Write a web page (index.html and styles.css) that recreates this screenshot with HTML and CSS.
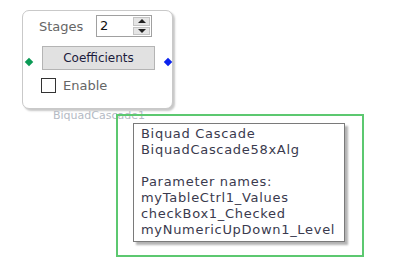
FILE: index.html
```html
<!DOCTYPE html>
<html>
  <head>
    <title>Biquad Cascade</title>
    <link rel="stylesheet" href="styles.css">
  </head>
  <body>
    <div class="canvas">
      <div class="node">
        <div class="row">
          <span class="label">Stages</span>
          <div class="numeric">
            <span class="value">2</span>
            <div class="spin">
              <div class="spin-btn"><span class="arrow up"></span></div>
              <div class="spin-btn"><span class="arrow down"></span></div>
            </div>
          </div>
        </div>
        <div class="button">Coefficients</div>
        <div class="check-row">
          <span class="checkbox"></span>
          <span class="label">Enable</span>
        </div>
        <span class="port port-in"></span>
        <span class="port port-out"></span>
      </div>
      <div class="node-name">BiquadCascade1</div>
      <div class="selection"></div>
      <div class="tooltip">
        <div>Biquad Cascade</div>
        <div>BiquadCascade58xAlg</div>
        <div>&nbsp;</div>
        <div>Parameter names:</div>
        <div>myTableCtrl1_Values</div>
        <div>checkBox1_Checked</div>
        <div>myNumericUpDown1_Level</div>
      </div>
    </div>
  </body>
</html>
```

FILE: styles.css
```css
body {
  margin: 0;
  background: #fff;
  font-family: "DejaVu Sans", "Open Sans", sans-serif;
}

.canvas {
  position: relative;
  width: 400px;
  height: 269px;
  overflow: hidden;
}

.node {
  position: absolute;
  left: 22px;
  top: 10px;
  width: 151px;
  height: 99px;
  box-sizing: border-box;
  border: 1px solid #c9c9c9;
  border-radius: 7px;
  box-shadow: 2px 2px 2px rgba(0, 0, 0, 0.22);
  background: #fff;
  padding: 4px 0 0 16px;
}

.row {
  display: flex;
  align-items: center;
  height: 22px;
}

.label {
  font-size: 13px;
  color: #666;
}

.row .label {
  width: 57px;
}

.numeric {
  display: flex;
  align-items: center;
  width: 56px;
  height: 22px;
  box-sizing: border-box;
  border: 1px solid #a0a0a0;
  background: #fff;
  padding: 1px;
}

.value {
  flex: 1;
  font-size: 13px;
  line-height: 18px;
  color: #111;
  padding-left: 2px;
}

.spin {
  display: flex;
  flex-direction: column;
  gap: 1px;
  width: 17px;
  height: 18px;
}

.spin-btn {
  flex: 1;
  display: flex;
  align-items: center;
  justify-content: center;
  background: #e5e5e5;
  border: 1px solid #c4c4c4;
  box-sizing: border-box;
}

.arrow {
  width: 0;
  height: 0;
  border-left: 4px solid transparent;
  border-right: 4px solid transparent;
}

.arrow.up {
  border-bottom: 4px solid #222;
}

.arrow.down {
  border-top: 4px solid #222;
}

.button {
  margin: 9px 0 0 3px;
  width: 113px;
  height: 24px;
  box-sizing: border-box;
  border: 1px solid #b4b4b4;
  background: #e1e1e1;
  text-align: center;
  font-size: 12px;
  line-height: 22px;
  color: #1c1c3c;
}

.check-row {
  display: flex;
  align-items: center;
  gap: 7px;
  margin: 8px 0 0 2px;
}

.checkbox {
  width: 15px;
  height: 15px;
  box-sizing: border-box;
  border: 1px solid #333;
  background: #fff;
}

.port {
  position: absolute;
  top: 48px;
  width: 6px;
  height: 6px;
  transform: rotate(45deg);
}

.port-in {
  left: 3px;
  background: #0a9a55;
}

.port-out {
  left: 142px;
  background: #0a22ee;
}

.node-name {
  position: absolute;
  left: 53px;
  top: 109px;
  font-size: 11px;
  color: #b4bac4;
}

.selection {
  position: absolute;
  left: 116px;
  top: 114px;
  width: 248px;
  height: 143px;
  box-sizing: border-box;
  border: 2px solid #5cc870;
}

.tooltip {
  position: absolute;
  left: 133px;
  top: 123px;
  width: 212px;
  height: 119px;
  box-sizing: border-box;
  border: 1px solid #7a7a7a;
  background: #fff;
  box-shadow: 3px 3px 2px rgba(0, 0, 0, 0.3);
  padding: 2px 0 0 7px;
  font-size: 13px;
  letter-spacing: 0.7px;
  line-height: 16px;
  color: #3a3a4e;
}
```
